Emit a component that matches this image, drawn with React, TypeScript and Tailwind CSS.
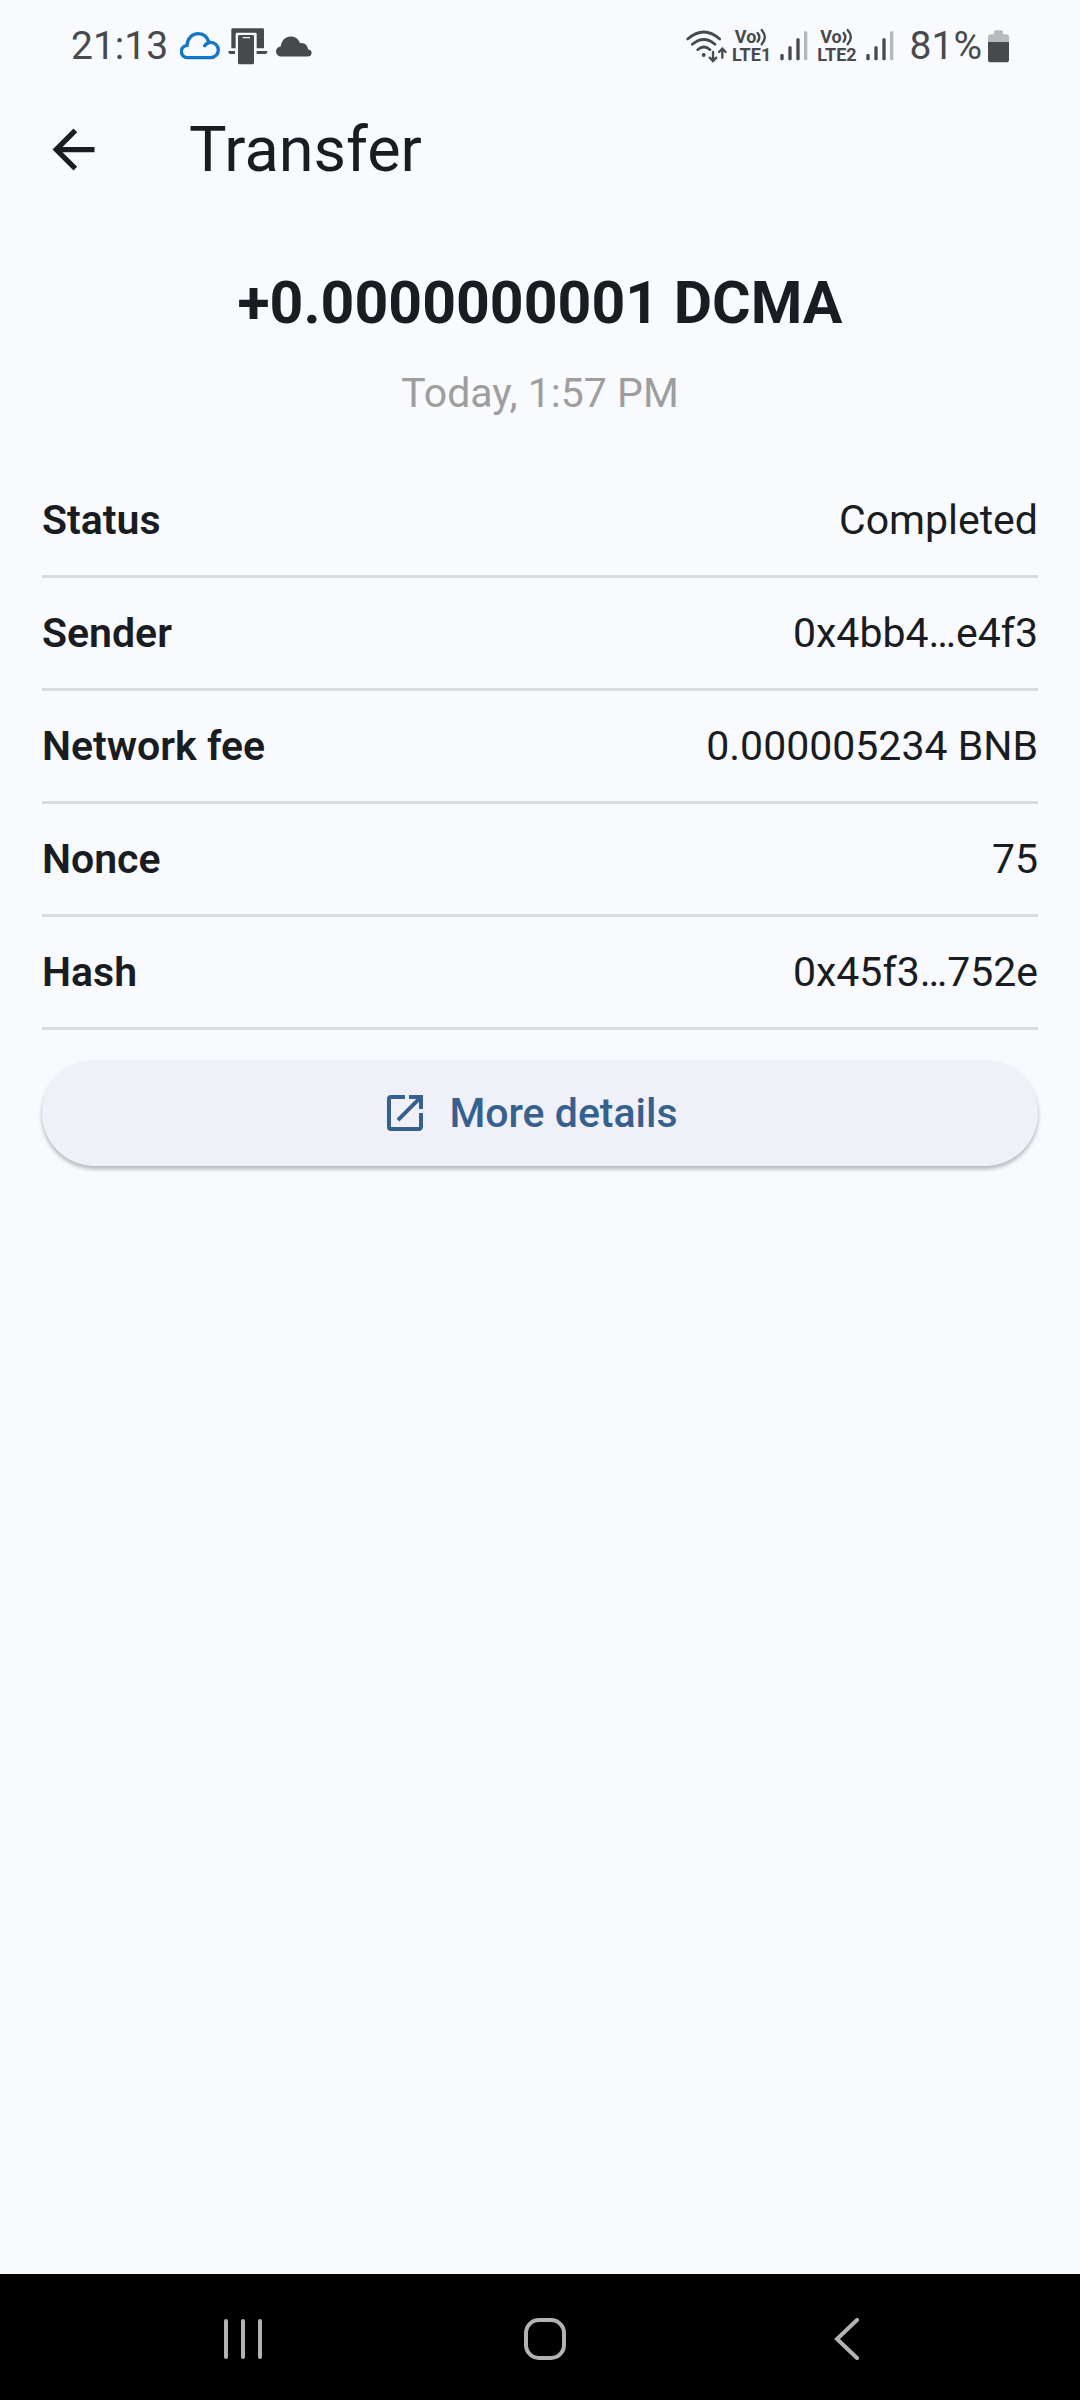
import { MdArrowBack, MdOpenInNew } from 'react-icons/md';

const details = [
  { label: 'Status', value: 'Completed' },
  { label: 'Sender', value: '0x4bb4…e4f3' },
  { label: 'Network fee', value: '0.000005234 BNB' },
  { label: 'Nonce', value: '75' },
  { label: 'Hash', value: '0x45f3…752e' },
];

function CloudOutlineIcon() {
  return (
    <svg viewBox="0 0 120 90" className="w-10 h-[30px]" fill="none" stroke="#1377c8" strokeWidth="10" strokeLinecap="round">
      <path d="M74 44C79 37 84 34 92 34A23 23 0 0 1 92 80H24A18.5 18.5 0 0 1 21 43C22 22 37 8 54 8C70 8 81 17 86 32" />
    </svg>
  );
}

function LinkedDevicesIcon() {
  return (
    <svg viewBox="0 0 120 111" className="w-10 h-[37px]" fill="#48494d">
      <path d="M14 1H104Q108 1 108 5V61H86V18Q86 14 82 14H27Q23 14 23 18V61H10V5Q10 1 14 1Z" />
      <path d="M1 69H21V78H8Q1 78 1 69ZM86 69H118Q118 78 111 78H86Z" />
      <path fillRule="evenodd" d="M35 21H74Q78 21 78 25V104Q78 109 73 109H35Q30 109 30 104V25Q30 21 35 21ZM44 27V31H66V27Z" />
    </svg>
  );
}

function CloudIcon() {
  return (
    <svg viewBox="0 0 108 62" className="w-9 h-[21px]" fill="#48494d">
      <path d="M16 61A15 15 0 0 1 14 31C17 12 29 1 44 1C58 1 68 9 72 21C86 19 95 28 96 39C103 40 107 44 107 50C107 57 102 61 95 61Z" />
    </svg>
  );
}

function WifiIcon() {
  return (
    <svg viewBox="0 0 126 99" className="w-[42px] h-[33px]" fill="none" stroke="#48494d" strokeWidth="8" strokeLinecap="round">
      <path d="M5 27Q54 -15 101 27M19 43Q54 14 87 43M35 59Q54 43 72 59" />
      <circle cx="53" cy="75" r="6" fill="#48494d" stroke="none" />
      <path d="M81 66V92M71 83L81 93L91 83M109 83V56M99 66L109 56L119 66" strokeWidth="7" />
    </svg>
  );
}

function SignalIcon() {
  return (
    <svg viewBox="0 0 84 90" className="w-7 h-[30px]" fill="#48494d">
      <rect x="1" y="69" width="10" height="19" rx="4" />
      <rect x="25" y="46" width="10" height="42" rx="4" />
      <rect x="49" y="22" width="10" height="66" rx="4" />
      <rect x="72" y="1" width="10" height="87" rx="4" fill="#b6b7bb" />
    </svg>
  );
}

function BatteryIcon() {
  return (
    <svg viewBox="0 0 63 99" className="w-[21px] h-[33px]">
      <path d="M18 6Q18 1 23 1H40Q45 1 45 6V13H55Q63 13 63 21V40H0V21Q0 13 8 13H18Z" fill="#b9babe" />
      <path d="M0 36H63V90Q63 97 55 97H8Q0 97 0 90Z" fill="#48494d" />
    </svg>
  );
}

function VolteLabel({ sim }: { sim: number }) {
  return (
    <div className="flex flex-col items-center text-lg leading-[18px] font-bold">
      <span className="flex items-center">
        Vo
        <svg viewBox="0 0 36 54" className="w-3 h-[18px]" fill="none" stroke="#48494d" strokeWidth="7" strokeLinecap="round">
          <path d="M5 15Q15 27 5 41M17 6Q36 27 17 49" />
        </svg>
      </span>
      <span>LTE{sim}</span>
    </div>
  );
}

function StatusBar() {
  return (
    <div className="h-[76px] pt-4 pl-[71px] pr-[71px] flex items-center justify-between text-[#48494d]">
      <div className="flex items-center">
        <span className="text-[39px] leading-[60px] mr-3">21:13</span>
        <div className="flex items-center gap-2">
          <CloudOutlineIcon />
          <LinkedDevicesIcon />
          <CloudIcon />
        </div>
      </div>
      <div className="flex items-center">
        <WifiIcon />
        <div className="flex items-center gap-[9px] ml-1">
          <VolteLabel sim={1} />
          <SignalIcon />
          <VolteLabel sim={2} />
          <SignalIcon />
        </div>
        <span className="text-[39px] leading-[60px] ml-4 mr-1.5">81%</span>
        <BatteryIcon />
      </div>
    </div>
  );
}

function NavigationBar() {
  return (
    <nav className="h-[126px] pt-1 bg-black pl-[92px] pr-[82px] flex items-center">
      <button aria-label="Recent apps" className="flex-1 h-full flex items-center justify-center">
        <svg viewBox="0 0 40 42" className="w-10 h-[42px]" stroke="#b3b3b3" strokeWidth="4" strokeLinecap="round">
          <path d="M3 3V39M20 3V39M37 3V39" />
        </svg>
      </button>
      <button aria-label="Home" className="flex-1 h-full flex items-center justify-center">
        <svg viewBox="0 0 42 42" className="w-[42px] h-[42px]" fill="none" stroke="#b3b3b3" strokeWidth="4">
          <rect x="2" y="2" width="38" height="38" rx="13" />
        </svg>
      </button>
      <button aria-label="Back" className="flex-1 h-full flex items-center justify-center">
        <svg viewBox="0 0 26 42" className="w-[26px] h-[42px]" fill="none" stroke="#b3b3b3" strokeWidth="4" strokeLinecap="round">
          <path d="M23 2L3 21L23 40" />
        </svg>
      </button>
    </nav>
  );
}

export default function App() {
  return (
    <div className="min-h-screen flex flex-col bg-[#f8fafe] text-[#191c20] font-['Roboto',sans-serif]">
      <StatusBar />

      {/* App bar */}
      <header className="h-[147px] px-[42px] flex items-center gap-[84px]">
        <button aria-label="Go back">
          <MdArrowBack className="w-[63px] h-[63px]" />
        </button>
        <h1 className="text-[63px] leading-[76px]">Transfer</h1>
      </header>

      <main className="flex-1 px-[42px] pt-[42px]">
        <div className="text-center">
          <h2 className="text-[59px] leading-[76px] font-bold">+0.0000000001 DCMA</h2>
          <p className="mt-[22px] text-[41px] leading-[60px] text-[#9e9e9e]">Today, 1:57 PM</p>
        </div>

        <dl className="mt-[42px] text-[41px] leading-[60px]">
          {details.map((item) => (
            <div key={item.label} className="h-[113px] flex items-center justify-between border-b-3 border-[#dadbdf]">
              <dt className="font-semibold">{item.label}</dt>
              <dd>{item.value}</dd>
            </div>
          ))}
        </dl>

        <button className="mt-[30px] w-full h-[106px] pl-[42px] pr-[63px] flex items-center justify-center gap-5 rounded-full bg-[#f0f0f8] text-[#36618e] text-[41px] leading-[60px] font-medium shadow-[0_3px_4px_rgba(0,0,0,0.28)]">
          <MdOpenInNew className="w-12 h-12" />
          More details
        </button>
      </main>

      <NavigationBar />
    </div>
  );
}
